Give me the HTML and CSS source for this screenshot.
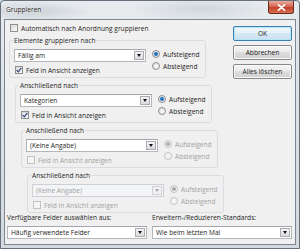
FILE: index.html
```html
<!DOCTYPE html>
<html lang="de">
<head>
    <meta charset="UTF-8">
    <meta name="viewport" content="width=device-width, initial-scale=1.0">
    <title>Gruppieren</title>
    <link rel="stylesheet" href="styles.css">
</head>
<body>
    <div class="window">
        <div class="titlebar">
            <span class="title">Gruppieren</span>
            <span class="close">
                <svg width="9" height="7" viewBox="0 0 9 7"><path d="M1.5 0.8 L7.5 6.2 M7.5 0.8 L1.5 6.2" stroke="#fff" stroke-width="1.7" stroke-linecap="round"/></svg>
            </span>
        </div>
        <div class="client">
            <div class="top">
                <div class="left">
                    <label class="check-row auto"><span class="check"></span>Automatisch nach Anordnung gruppieren</label>

                    <div class="group">
                        <span class="group-title">Elemente gruppieren nach</span>
                        <div class="group-body">
                            <div class="group-main">
                                <div class="combo"><span class="combo-text">Fällig am</span><span class="combo-btn"><i class="arrow"></i></span></div>
                                <label class="check-row"><span class="check checked"><svg width="6" height="6" viewBox="0 0 6 6"><path d="M0.6 3.1 L2.3 4.9 L5.4 0.8" fill="none" stroke="#34467a" stroke-width="1.2"/></svg></span>Feld in Ansicht anzeigen</label>
                            </div>
                            <div class="sort">
                                <label class="radio-row"><span class="radio checked"></span>Aufsteigend</label>
                                <label class="radio-row"><span class="radio"></span>Absteigend</label>
                            </div>
                        </div>
                    </div>

                    <div class="group level-2">
                        <span class="group-title">Anschließend nach</span>
                        <div class="group-body">
                            <div class="group-main">
                                <div class="combo"><span class="combo-text">Kategorien</span><span class="combo-btn"><i class="arrow"></i></span></div>
                                <label class="check-row"><span class="check checked"><svg width="6" height="6" viewBox="0 0 6 6"><path d="M0.6 3.1 L2.3 4.9 L5.4 0.8" fill="none" stroke="#34467a" stroke-width="1.2"/></svg></span>Feld in Ansicht anzeigen</label>
                            </div>
                            <div class="sort">
                                <label class="radio-row"><span class="radio checked"></span>Aufsteigend</label>
                                <label class="radio-row"><span class="radio"></span>Absteigend</label>
                            </div>
                        </div>
                    </div>

                    <div class="group level-3">
                        <span class="group-title">Anschließend nach</span>
                        <div class="group-body">
                            <div class="group-main">
                                <div class="combo"><span class="combo-text">(Keine Angabe)</span><span class="combo-btn"><i class="arrow"></i></span></div>
                                <label class="check-row disabled"><span class="check"></span>Feld in Ansicht anzeigen</label>
                            </div>
                            <div class="sort disabled">
                                <label class="radio-row"><span class="radio checked"></span>Aufsteigend</label>
                                <label class="radio-row"><span class="radio"></span>Absteigend</label>
                            </div>
                        </div>
                    </div>

                    <div class="group level-4">
                        <span class="group-title">Anschließend nach</span>
                        <div class="group-body">
                            <div class="group-main">
                                <div class="combo disabled"><span class="combo-text">(Keine Angabe)</span><span class="combo-btn"><i class="arrow"></i></span></div>
                                <label class="check-row disabled"><span class="check"></span>Feld in Ansicht anzeigen</label>
                            </div>
                            <div class="sort disabled">
                                <label class="radio-row"><span class="radio checked"></span>Aufsteigend</label>
                                <label class="radio-row"><span class="radio"></span>Absteigend</label>
                            </div>
                        </div>
                    </div>
                </div>

                <div class="buttons">
                    <button class="btn default">OK</button>
                    <button class="btn">Abbrechen</button>
                    <button class="btn">Alles löschen</button>
                </div>
            </div>

            <div class="bottom">
                <div class="field">
                    <span class="field-label">Verfügbare Felder auswählen aus:</span>
                    <div class="combo"><span class="combo-text">Häufig verwendete Felder</span><span class="combo-btn"><i class="arrow"></i></span></div>
                </div>
                <div class="field">
                    <span class="field-label">Erweitern-/Reduzieren-Standards:</span>
                    <div class="combo"><span class="combo-text">Wie beim letzten Mal</span><span class="combo-btn"><i class="arrow"></i></span></div>
                </div>
            </div>
        </div>
    </div>
</body>
</html>
```

FILE: styles.css
```css
* {
    box-sizing: border-box;
}
body {
    margin: 0;
    font-family: "Open Sans", "Noto Sans", sans-serif;
    font-size: 6.6px;
    color: #1e1e1e;
    background-color: #d4dae0;
}
.window {
    width: 300px;
    height: 249px;
    display: flex;
    flex-direction: column;
    padding: 0 3px 3px;
    border: 1px solid #66717c;
    border-radius: 4px 4px 0 0;
    background:
        radial-gradient(ellipse 60px 10px at 30px 10px, rgba(150, 158, 168, 0.35), transparent),
        radial-gradient(ellipse 70px 12px at 200px 8px, rgba(160, 168, 178, 0.3), transparent),
        linear-gradient(180deg, #e7ebee 0%, #dde2e7 40%, #d3d9df 100%);
}
.titlebar {
    height: 18px;
    display: flex;
    align-items: flex-start;
}
.title {
    margin: 4px 0 0 2px;
    line-height: 10px;
    text-shadow: 0 0 4px #fff, 0 0 2px #fff;
}
.close {
    margin-left: auto;
    margin-right: 2px;
    width: 26px;
    height: 13px;
    display: flex;
    align-items: center;
    justify-content: center;
    border: 1px solid #6d2a1f;
    border-top: none;
    border-radius: 0 0 3px 3px;
    background: linear-gradient(180deg, #e9a99b 0%, #d66a55 45%, #c2412b 55%, #d8704f 100%);
}
.client {
    flex: 1;
    display: flex;
    flex-direction: column;
    border: 1px solid #7b8794;
    background-color: #f0f0f0;
}
.top {
    display: flex;
}
.left {
    width: 219px;
    padding-left: 4px;
}
.check-row,
.radio-row {
    display: flex;
    align-items: center;
    gap: 3px;
    height: 12px;
    white-space: nowrap;
}
.auto {
    margin: 2px 0 0 1px;
}
.check {
    flex: none;
    width: 8px;
    height: 8px;
    display: flex;
    align-items: center;
    justify-content: center;
    border: 1px solid #8e8f8f;
    background: linear-gradient(135deg, #d6d9dd, #fbfbfb);
}
.radio {
    flex: none;
    width: 8px;
    height: 8px;
    border: 1px solid #8e8f8f;
    border-radius: 50%;
    background: radial-gradient(circle at 60% 60%, #fdfdfd, #d2d4d6);
}
.radio.checked {
    background: radial-gradient(circle, #1f5aa2 0, #3f85cc 1.6px, #dfe6ee 2.4px, #f7f7f7 100%);
}
.disabled {
    color: #a2a2a2;
}
.disabled .check,
.disabled .radio {
    border-color: #c2c2c2;
    background: #f4f4f4;
}
.disabled .radio.checked {
    background: radial-gradient(circle, #9c9c9c 0, #b4b4b4 1.6px, #f4f4f4 2.4px);
}
.group {
    width: 197px;
    height: 38px;
    margin-top: 6px;
    padding: 0 4px;
    display: flex;
    flex-direction: column;
    border: 1px solid #d9dde1;
    border-radius: 3px;
}
.group.level-2 {
    margin: 7px 0 0 6px;
}
.group.level-3 {
    margin: 7px 0 0 12px;
}
.group.level-4 {
    margin: 7px 0 0 18px;
}
.group-title {
    align-self: flex-start;
    height: 9px;
    line-height: 9px;
    margin: -5px 0 0 -1px;
    padding: 0 1px;
    background-color: #f0f0f0;
}
.group-body {
    display: flex;
    align-items: flex-start;
}
.group-main {
    width: 132px;
    margin-top: 4px;
}
.group-main .check-row {
    margin: 2px 0 0 1px;
}
.sort {
    margin: 3px 0 0 6px;
}
.combo {
    display: flex;
    height: 13px;
    border: 1px solid #b4b8bd;
    border-top-color: #a3a7ad;
    background-color: #fff;
}
.combo-text {
    flex: 1;
    padding-left: 3px;
    line-height: 11px;
    white-space: nowrap;
    overflow: hidden;
}
.combo-btn {
    width: 10px;
    margin: 1px;
    display: flex;
    align-items: center;
    justify-content: center;
    border: 1px solid #a9adb2;
    background: linear-gradient(180deg, #f4f4f4, #dcdcdc);
}
.arrow {
    width: 0;
    height: 0;
    border-left: 2.5px solid transparent;
    border-right: 2.5px solid transparent;
    border-top: 3px solid #111;
}
.combo.disabled {
    border-color: #cdd1d6;
    background-color: #f3f4f6;
}
.combo.disabled .combo-btn {
    border-color: #cfd2d6;
    background: #f2f2f2;
}
.combo.disabled .arrow {
    border-top-color: #a8a8a8;
}
.buttons {
    width: 59px;
    margin: 6px 3px 0 auto;
    display: flex;
    flex-direction: column;
    gap: 4px;
}
.btn {
    height: 15px;
    padding: 0;
    font: inherit;
    color: #1e1e1e;
    border: 1px solid #878787;
    border-radius: 2px;
    box-shadow: inset 0 0 0 1px #fbfbfb;
    background: linear-gradient(180deg, #f3f3f3 0%, #ebebeb 50%, #dddddd 50%, #d0d0d0 100%);
}
.btn.default {
    border-color: #3c7fb1;
    box-shadow: inset 0 0 0 1px #b6e6f8;
    background: linear-gradient(180deg, #f1f8fc 0%, #e6f1f8 50%, #d6e8f4 50%, #cbe1f0 100%);
}
.bottom {
    display: grid;
    grid-template-columns: 140px 140px;
    column-gap: 5px;
    padding-left: 2px;
}
.field {
    display: flex;
    flex-direction: column;
}
.field-label {
    height: 10px;
    line-height: 10px;
    margin-bottom: 3px;
    white-space: nowrap;
}
```
